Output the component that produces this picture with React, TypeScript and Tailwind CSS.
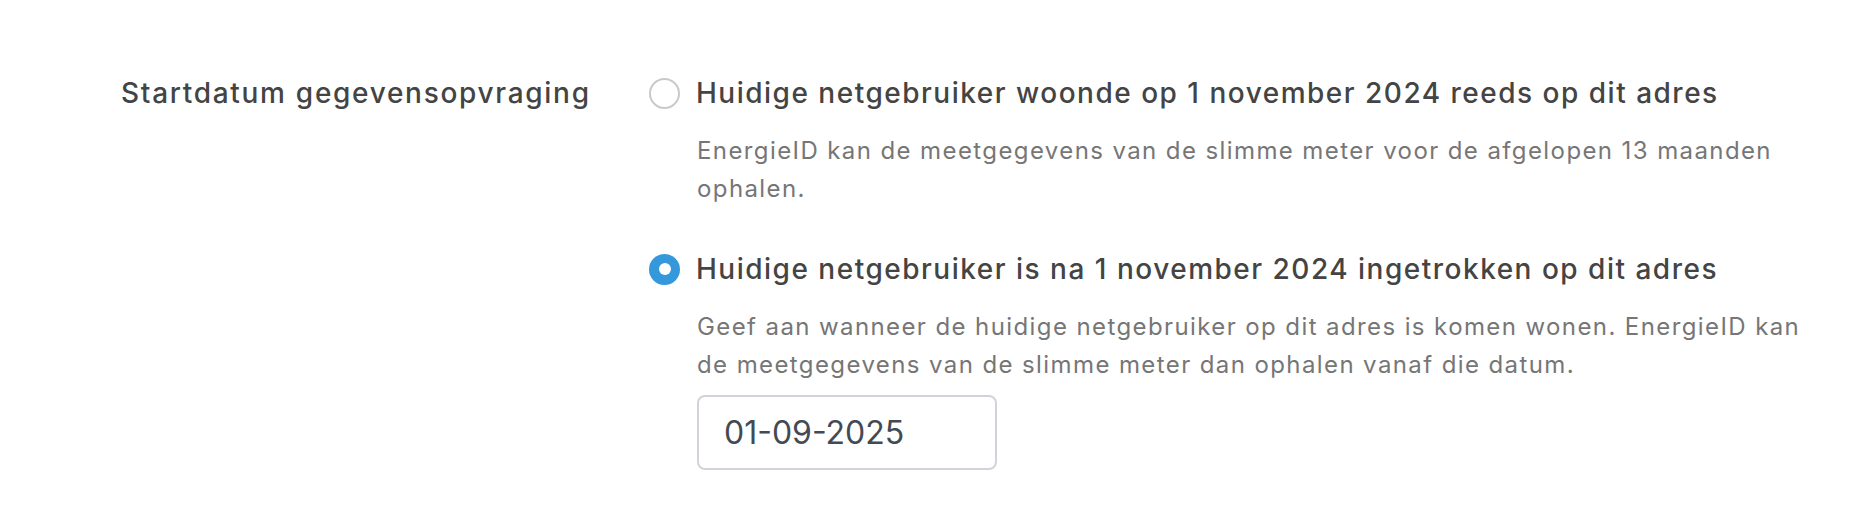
import { useState } from 'react';

interface Option {
  id: string;
  title: string;
  help: string;
}

const options: Option[] = [
  {
    id: 'before',
    title: 'Huidige netgebruiker woonde op 1 november 2024 reeds op dit adres',
    help: 'EnergieID kan de meetgegevens van de slimme meter voor de afgelopen 13 maanden ophalen.',
  },
  {
    id: 'after',
    title: 'Huidige netgebruiker is na 1 november 2024 ingetrokken op dit adres',
    help: 'Geef aan wanneer de huidige netgebruiker op dit adres is komen wonen. EnergieID kan de meetgegevens van de slimme meter dan ophalen vanaf die datum.',
  },
];

function Radio({ checked }: { checked: boolean }) {
  return checked ? (
    <span className="flex h-[31px] w-[31px] shrink-0 items-center justify-center rounded-full bg-[#3598db]">
      <span className="h-[12px] w-[12px] rounded-full bg-white" />
    </span>
  ) : (
    <span className="h-[31px] w-[31px] shrink-0 rounded-full border-2 border-[#c9c9c9] bg-white" />
  );
}

export default function App() {
  const [value, setValue] = useState('after');
  const [date, setDate] = useState('01-09-2025');

  return (
    <div
      className="min-h-[522px] bg-white pt-[72px] text-[#444444]"
      style={{ fontFamily: 'Inter, "Noto Sans", sans-serif' }}
    >
      <div className="flex pr-[16px] pl-[121px]">
        <div className="w-[528px] shrink-0 text-[28px] leading-[42px] font-medium tracking-[1.7px]">
          Startdatum gegevensopvraging
        </div>
        <div className="flex flex-1 flex-col gap-[40px]">
          {options.map((o) => (
            <div key={o.id} className="flex flex-col">
              <label
                className="flex cursor-pointer items-center gap-[16px]"
                onClick={() => setValue(o.id)}
              >
                <Radio checked={value === o.id} />
                <span className="text-[28px] leading-[42px] font-medium tracking-[1.5px]">{o.title}</span>
              </label>
              <p className="mt-[18px] pl-[48px] text-[24px] leading-[38px] tracking-[1.4px] text-[#767676]">
                {o.help}
              </p>
              {o.id === 'after' && value === 'after' && (
                <div className="mt-[11px] pl-[48px]">
                  <input
                    value={date}
                    onChange={(e) => setDate(e.target.value)}
                    className="h-[75px] w-[300px] rounded-[8px] border-2 border-[#d0d4da] px-[25px] text-[32px] text-[#434a54] outline-none"
                  />
                </div>
              )}
            </div>
          ))}
        </div>
      </div>
    </div>
  );
}
